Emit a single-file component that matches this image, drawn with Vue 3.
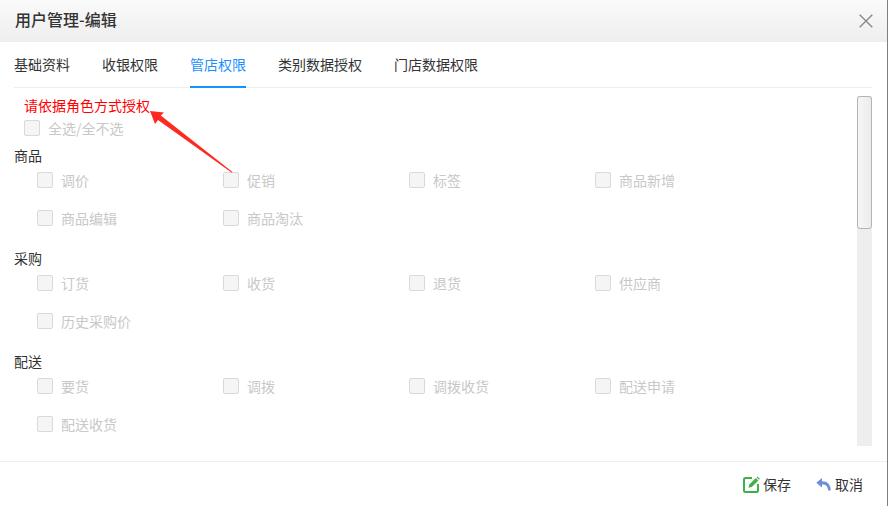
<script setup>
const tabs = ['基础资料', '收银权限', '管店权限', '类别数据授权', '门店数据权限']
const groups = [
  { name: '商品', items: ['调价', '促销', '标签', '商品新增', '商品编辑', '商品淘汰'] },
  { name: '采购', items: ['订货', '收货', '退货', '供应商', '历史采购价'] },
  { name: '配送', items: ['要货', '调拨', '调拨收货', '配送申请', '配送收货'] }
]
</script>

<template>
  <div class="dialog">
    <header class="head">
      <h1>用户管理-编辑</h1>
      <svg class="close" width="14" height="14" viewBox="0 0 14 14"><path d="M0.700 0.700L13.300 13.300M13.300 0.700L0.700 13.300" stroke="#858585" stroke-width="1.300" fill="none" /></svg>
    </header>
    <nav class="tabs">
      <span v-for="(t, i) in tabs" :key="t" class="tab" :class="{ active: i === 2 }">{{ t }}</span>
    </nav>
    <main class="body">
      <div class="content">
        <p class="notice">请依据角色方式授权</p>
        <label class="check all"><i class="box"></i><span>全选/全不选</span></label>
        <section v-for="g in groups" :key="g.name" class="group">
          <h2>{{ g.name }}</h2>
          <div class="grid">
            <label v-for="it in g.items" :key="it" class="check"><i class="box"></i><span>{{ it }}</span></label>
          </div>
        </section>
      </div>
      <div class="track"><div class="thumb"></div></div>
      <svg class="arrow" width="84" height="63" viewBox="0 0 84 63"><path d="M0 0L14 1.500L10.800 4.500L82.500 61L81.500 61.500L8 9L5 13Z" fill="#ff2a1f" /></svg>
    </main>
    <footer class="foot">
      <button class="btn save">
        <svg width="17" height="17" viewBox="0 0 17 17"><path d="M9 2H2.500Q1 2 1 3.500V14.500Q1 16 2.500 16H13.500Q15 16 15 14.500V8" stroke="#3eaf4a" stroke-width="2" fill="none" /><path d="M5.500 11.800L6.300 8.500L12.800 2L15.300 4.500L8.800 11Z" fill="#3eaf4a" /><path d="M13.600 1.200L14.500 0.500L16.800 2.800L16 3.700Z" fill="#3eaf4a" /></svg>
        保存
      </button>
      <button class="btn">
        <svg width="15" height="14" viewBox="0 0 15 14"><path d="M6 1L0.300 5.800L6 10.500V7.500C9.500 7.300 11.500 8.800 12.300 13.500H14.700C14.700 7.500 11.500 4.200 6 4.200Z" fill="#6b8fdc" /></svg>
        取消
      </button>
    </footer>
  </div>
</template>

<style scoped>
.dialog {
  position: relative;
  width: 888px;
  height: 506px;
  box-sizing: border-box;
  display: flex;
  flex-direction: column;
  background: #fff;
  border-right: 1px solid #7f7f7f;
  overflow: hidden;
  font-family: "Noto Sans CJK SC", "Liberation Sans", sans-serif;
  font-size: 14px;
  color: #333;
}
.dialog::after {
  content: "";
  position: absolute;
  right: -1px;
  top: 11px;
  width: 1px;
  height: 9px;
  background: #3a3320;
}
.head {
  height: 42px;
  flex: none;
  display: flex;
  align-items: center;
  justify-content: space-between;
  padding: 0 14px 0 15px;
  background: linear-gradient(#fafafa, #eeeeee);
}
.head h1 {
  margin: 0 0 4px;
  font-size: 16px;
  font-weight: 500;
  color: #333;
  line-height: 20px;
}
.tabs {
  height: 46px;
  flex: none;
  margin: 0 15px 0 14px;
  display: flex;
  gap: 32px;
  border-bottom: 1px solid #eeeeee;
  box-sizing: border-box;
}
.tab {
  line-height: 44px;
  height: 46px;
  box-sizing: border-box;
  color: #333;
}
.tab.active {
  color: #1890ff;
  border-bottom: 2px solid #1890ff;
}
.body {
  position: relative;
  height: 373px;
  flex: none;
  padding: 7px 15px 0 14px;
  box-sizing: border-box;
  display: flex;
  justify-content: space-between;
  overflow: hidden;
}
.content { width: 840px; }
.notice {
  margin: 0 0 5px 10px;
  color: #ff0000;
  font-size: 14px;
  line-height: 20px;
}
.check {
  display: flex;
  align-items: center;
  gap: 8px;
  color: #c8c8c8;
  height: 16px;
}
.check.all { margin-left: 10px; line-height: 16px; }
.box {
  width: 16px;
  height: 16px;
  box-sizing: border-box;
  border: 1px solid #d9d9d9;
  border-radius: 2px;
  background: #f5f5f5;
  flex: none;
}
.group { margin-top: 9px; height: 94px; }
.group h2 {
  margin: 0;
  font-size: 14px;
  font-weight: 400;
  color: #333;
  line-height: 20px;
}
.grid {
  margin: 7px 0 0 23px;
  display: grid;
  grid-template-columns: repeat(4, 186px);
  row-gap: 22px;
}
.track {
  position: absolute;
  right: 15px;
  top: 8px;
  width: 15px;
  height: 350px;
  background: #eeeeee;
}
.thumb {
  height: 133px;
  box-sizing: border-box;
  border: 1px solid #b4b4b4;
  border-radius: 3px;
  background: linear-gradient(90deg, #f6f6f6, #ececec);
}
.arrow {
  position: absolute;
  left: 150px;
  top: 23px;
}
.foot {
  height: 45px;
  flex: none;
  border-top: 1px solid #eeeeee;
  display: flex;
  justify-content: flex-end;
  align-items: center;
  gap: 25px;
  padding-right: 24px;
  box-sizing: border-box;
}
.btn {
  border: 0;
  background: none;
  padding: 0;
  display: flex;
  align-items: center;
  gap: 4px;
  font: inherit;
  color: #333;
}
.btn.save { gap: 3px; }
</style>
